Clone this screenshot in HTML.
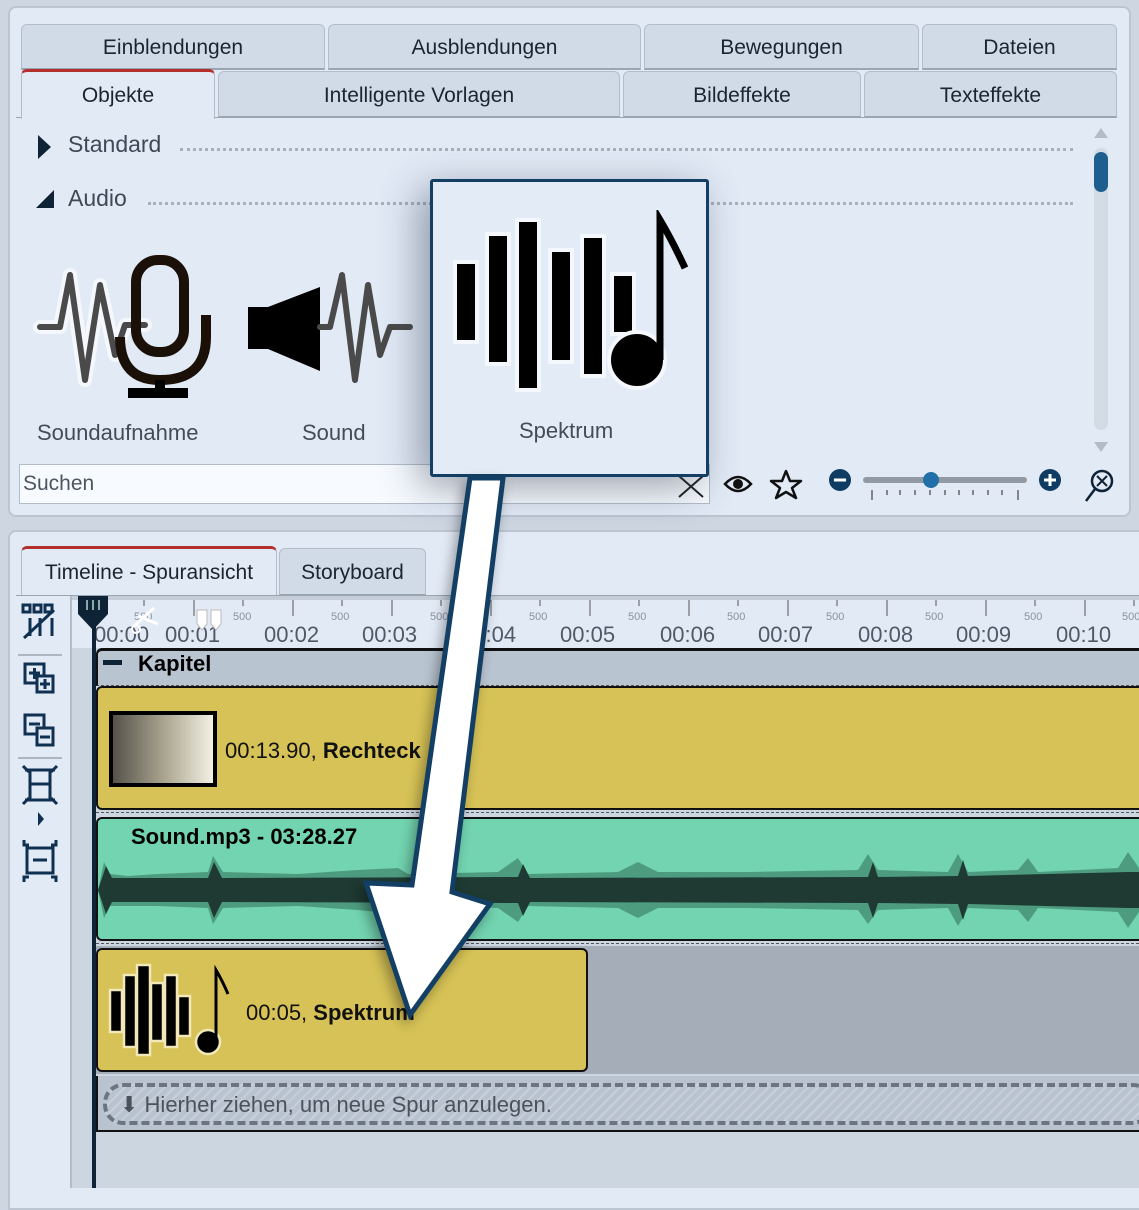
<!DOCTYPE html>
<html><head><meta charset="utf-8"><style>
*{box-sizing:border-box;margin:0;padding:0}
body{width:1139px;height:1188px;background:#cdd6e1;font-family:"Liberation Sans","DejaVu Sans",sans-serif;position:relative;overflow:hidden}
.abs{position:absolute}
.panel{position:absolute;background:#e2eaf6;border:2px solid #bcc6d2;border-radius:8px}
.tab{position:absolute;background:#d1dbe7;border:1px solid #b3bdc9;border-bottom:2px solid #9aa5b2;border-radius:6px 6px 0 0;font-size:21px;color:#1b2530;text-align:center}
.tab.act{background:#e2eaf6;border-top:3px solid #b3302e;border-bottom:none}
.lbl{position:absolute;font-size:22px;color:#444c56}
.time{position:absolute;font-size:22px;color:#505a66;top:622px}
.five{position:absolute;font-size:11px;color:#8a939e;top:611px}
</style></head><body>

<div class="panel" style="left:8px;top:6px;width:1123px;height:511px"></div>
<div class="tab" style="left:21px;top:24px;width:304px;height:46px;line-height:46px">Einblendungen</div>
<div class="tab" style="left:328px;top:24px;width:313px;height:46px;line-height:46px">Ausblendungen</div>
<div class="tab" style="left:644px;top:24px;width:275px;height:46px;line-height:46px">Bewegungen</div>
<div class="tab" style="left:922px;top:24px;width:195px;height:46px;line-height:46px">Dateien</div>
<div class="tab" style="left:218px;top:71px;width:402px;height:47px;line-height:47px">Intelligente Vorlagen</div>
<div class="tab" style="left:623px;top:71px;width:238px;height:47px;line-height:47px">Bildeffekte</div>
<div class="tab" style="left:864px;top:71px;width:253px;height:47px;line-height:47px">Texteffekte</div>
<div class="abs" style="left:16px;top:117px;width:1101px;height:1px;background:#9aa5b2"></div>
<div class="tab act" style="left:21px;top:69px;width:194px;height:50px;line-height:47px">Objekte</div>

<div class="abs" style="left:38px;top:135px;width:0;height:0;border-top:12px solid transparent;border-bottom:12px solid transparent;border-left:13px solid #0f2336"></div>
<div class="abs" style="left:68px;top:131px;font-size:23px;color:#3f4955">Standard</div>
<div class="abs" style="left:180px;top:148px;width:893px;border-top:3px dotted #a8b0ba"></div>
<div class="abs" style="left:36px;top:190px;width:0;height:0;border-left:18px solid transparent;border-bottom:18px solid #0f2336"></div>
<div class="abs" style="left:68px;top:185px;font-size:23px;color:#3f4955">Audio</div>
<div class="abs" style="left:148px;top:202px;width:925px;border-top:3px dotted #a8b0ba"></div>

<div class="abs" style="left:1094px;top:128px;width:0;height:0;border-left:7px solid transparent;border-right:7px solid transparent;border-bottom:10px solid #b4bcc6"></div>
<div class="abs" style="left:1094px;top:148px;width:14px;height:282px;background:#d3dbe5;border-radius:7px"></div>
<div class="abs" style="left:1094px;top:152px;width:14px;height:40px;background:#1f5f8f;border-radius:7px"></div>
<div class="abs" style="left:1094px;top:442px;width:0;height:0;border-left:7px solid transparent;border-right:7px solid transparent;border-top:10px solid #b4bcc6"></div>

<svg class="abs" style="left:30px;top:245px" width="400" height="165">
 <g fill="none" stroke="#f4f7fb" stroke-width="14" stroke-linejoin="round" stroke-linecap="round">
  <path d="M10 82 H30 L40 30 L55 135 L70 40 L85 110 L95 80 H115"/>
 </g>
 <g fill="none" stroke="#4a4a4a" stroke-width="6" stroke-linejoin="round" stroke-linecap="round">
  <path d="M10 82 H30 L40 30 L55 135 L70 40 L85 110 L95 80 H115"/>
 </g>
 <rect x="106" y="15" width="48" height="92" rx="22" fill="none" stroke="#1a1008" stroke-width="10"/>
 <path d="M90 92 Q90 135 130 135 Q176 135 176 92 V70" fill="none" stroke="#1a1008" stroke-width="10"/>
 <rect x="125" y="135" width="10" height="15" fill="#000"/>
 <rect x="98" y="143" width="60" height="10" fill="#000"/>
 <rect x="218" y="62" width="20" height="42" fill="#000"/>
 <path d="M238 62 L290 42 V126 L238 104Z" fill="#000"/>
 <path d="M290 82 H300 L312 30 L325 135 L338 40 L350 110 L360 82 H380" fill="none" stroke="#4a4a4a" stroke-width="6" stroke-linejoin="round" stroke-linecap="round"/>
</svg>
<div class="lbl" style="left:37px;top:420px">Soundaufnahme</div>
<div class="lbl" style="left:302px;top:420px">Sound</div>

<div class="abs" style="left:19px;top:464px;width:691px;height:40px;background:#f7fbff;border:1px solid #b3bdc9;font-size:21px;color:#4c5560;padding:7px 3px">Suchen</div>
<svg class="abs" style="left:676px;top:473px" width="30" height="26"><path d="M3 3 L27 24 M27 3 L3 24" stroke="#222" stroke-width="2"/></svg>

<svg class="abs" style="left:722px;top:466px" width="400" height="40">
 <path d="M3 18 Q16 4 29 18 Q16 32 3 18Z" fill="none" stroke="#111" stroke-width="2.5"/><circle cx="16" cy="18" r="5" fill="#111"/>
 <path d="M64 5 L68 15 L79 15 L70 22 L74 32 L64 26 L54 32 L58 22 L49 15 L60 15Z" fill="none" stroke="#111" stroke-width="2.5" stroke-linejoin="round"/>
 <circle cx="118" cy="14" r="11" fill="#0f3c63"/><rect x="112" y="12.5" width="12" height="3" fill="#fff"/>
 <rect x="141" y="11" width="164" height="6" rx="3" fill="#9199a4"/>
 <circle cx="209" cy="14" r="8" fill="#2370a8"/>
 <g stroke="#222" stroke-width="1"><path d="M150 24v10M165 24v5M178 24v5M193 24v5M208 24v5M223 24v5M237 24v5M251 24v5M266 24v5M280 24v5M296 24v10"/></g>
 <circle cx="328" cy="14" r="11" fill="#0f3c63"/><rect x="322" y="12.5" width="12" height="3" fill="#fff"/><rect x="326.5" y="8" width="3" height="12" fill="#fff"/>
 <circle cx="380" cy="15" r="10" fill="none" stroke="#0f2336" stroke-width="2.5"/><path d="M373 23 L364 35" stroke="#0f2336" stroke-width="2.5"/><path d="M375 10 L385 20 M385 10 L375 20" stroke="#0f2336" stroke-width="2"/>
</svg>

<div class="panel" style="left:8px;top:530px;width:1140px;height:680px;border-radius:8px 0 0 0"></div>
<div class="tab" style="left:279px;top:548px;width:147px;height:48px;line-height:48px">Storyboard</div>
<div class="tab act" style="left:21px;top:546px;width:256px;height:50px;line-height:47px">Timeline - Spuransicht</div>
<div class="abs" style="left:16px;top:595px;width:1123px;height:1px;background:#9aa5b2"></div>
<div class="abs" style="left:70px;top:596px;width:2px;height:592px;background:#b3bdc9"></div>
<svg class="abs" style="left:18px;top:598px" width="52" height="290" fill="none" stroke="#0f3050" stroke-width="3">
 <rect x="5" y="7" width="7" height="7"/><rect x="16" y="7" width="7" height="7"/><rect x="27" y="7" width="7" height="7"/>
 <path d="M12 20v18M22 20v18M34 20v18M6 40 L36 12"/>
 <path d="M0 57h44" stroke="#9aa5b2" stroke-width="1.5"/>
 <rect x="7" y="66" width="19" height="19"/><rect x="19" y="78" width="16" height="16" fill="#e2eaf6"/>
 <path d="M11 75h11M16.5 70v11M22 86h10M27 81v10"/>
 <rect x="7" y="117" width="19" height="19"/><rect x="19" y="130" width="16" height="17" fill="#e2eaf6"/>
 <path d="M11 126h11M22 139h10"/>
 <path d="M0 160h44" stroke="#9aa5b2" stroke-width="1.5"/>
 <path d="M7 172h30M7 202h30M12 172v30M32 172v30M12 186h20M5 168l6 6M39 168l-6 6M5 206l6-6M39 206l-6-6"/>
 <path d="M20 214v14l6-7z" fill="#0f3050" stroke="none"/>
 <path d="M9 250h26v25H9z M15 262h14 M6 242v5h5M38 242v5h-5M6 284v-5h5M38 284v-5h-5"/>
</svg>

<div class="abs" style="left:72px;top:596px;width:1067px;height:592px;background:#ccd6e1"></div>
<div class="abs" style="left:72px;top:596px;width:1067px;height:52px;background:#e2eaf6;border-top:4px solid #c4cdd8"></div>
<svg class="abs" style="left:72px;top:600px" width="1067" height="20" stroke="#555" stroke-width="1">
 <path d="M122 0v16M221 0v16M320 0v16M419 0v16M518 0v16M617 0v16M716 0v16M815 0v16M914 0v16M1013 0v16 M72 0v6M171 0v6M270 0v6M369 0v6M468 0v6M567 0v6M666 0v6M765 0v6M864 0v6M963 0v6M1062 0v6"/>
</svg>
<div class="five" style="left:134px">500</div><div class="five" style="left:233px">500</div><div class="five" style="left:331px">500</div><div class="five" style="left:430px">500</div><div class="five" style="left:529px">500</div><div class="five" style="left:628px">500</div><div class="five" style="left:727px">500</div><div class="five" style="left:826px">500</div><div class="five" style="left:925px">500</div><div class="five" style="left:1024px">500</div><div class="five" style="left:1122px">500</div>
<div class="time" style="left:94px">00:00</div><div class="time" style="left:165px">00:01</div><div class="time" style="left:264px">00:02</div><div class="time" style="left:362px">00:03</div><div class="time" style="left:461px">00:04</div><div class="time" style="left:560px">00:05</div><div class="time" style="left:660px">00:06</div><div class="time" style="left:758px">00:07</div><div class="time" style="left:858px">00:08</div><div class="time" style="left:956px">00:09</div><div class="time" style="left:1056px">00:10</div>
<svg class="abs" style="left:76px;top:596px" width="160" height="50">
 <path d="M2 0h30v18l-15 16l-15-16z" fill="#0f2336"/>
 <path d="M11 4v10M17 4v10M23 4v10" stroke="#8aa" stroke-width="2"/>
 <path d="M58 30l20-18M62 20l20 8" stroke="#fff" stroke-width="3"/><circle cx="60" cy="33" r="4" fill="none" stroke="#fff" stroke-width="2"/>
 <path d="M121 14h10v14l-5 6l-5-6z M135 14h10v14l-5 6l-5-6z" fill="#fff" stroke="#bbb"/>
</svg>
<div class="abs" style="left:92px;top:625px;width:4px;height:563px;background:#0f2336"></div>

<div class="abs" style="left:96px;top:648px;width:1043px;height:38px;background:#b9c4d1;border-top:3px solid #111;border-left:2px solid #111;border-radius:6px 0 0 0;border-bottom:1px dashed #555"></div>
<div class="abs" style="left:103px;top:660px;width:19px;height:5px;background:#0f2336"></div>
<div class="abs" style="left:138px;top:651px;font-size:22px;font-weight:bold;color:#000">Kapitel</div>
<div class="abs" style="left:96px;top:686px;width:1050px;height:124px;background:#d6c256;border:2px solid #111;border-radius:6px"></div>
<div class="abs" style="left:109px;top:711px;width:108px;height:76px;border:4px solid #000;background:linear-gradient(90deg,#55524a,#a8a38e 50%,#f3f1e4)"></div>
<div class="abs" style="left:225px;top:738px;font-size:22px;color:#111">00:13.90, <b>Rechteck</b></div>
<div class="abs" style="left:96px;top:812px;width:1043px;border-top:1px dashed #555"></div>
<div class="abs" style="left:96px;top:817px;width:1050px;height:124px;background:#72d4b0;border:2px solid #111;border-radius:6px"></div>
<div class="abs" style="left:131px;top:824px;font-size:22px;font-weight:bold;color:#000">Sound.mp3 - 03:28.27</div>
<svg class="abs" style="left:98px;top:850px" width="1041" height="80">
 <path d="M0 40 L6 12 L12 24 L30 26 L60 24 L110 22 L115 6 L125 22 L200 24 L260 20 L300 18 L310 24 L400 22 L420 8 L430 24 L520 22 L540 12 L560 22 L650 22 L760 20 L770 4 L780 20 L850 22 L860 4 L870 22 L920 20 L930 8 L940 22 L1020 18 L1030 2 L1041 18 L1041 62 L1030 78 L1020 62 L940 58 L930 72 L920 60 L870 58 L860 76 L850 58 L780 60 L770 74 L760 60 L650 58 L560 58 L540 68 L520 58 L430 56 L420 72 L400 58 L310 56 L300 64 L260 60 L200 56 L125 58 L115 74 L110 58 L60 56 L12 56 L6 68Z" fill="#4e9c80"/>
 <path d="M0 40 L8 16 L14 28 L110 28 L116 12 L124 28 L420 27 L425 14 L432 28 L770 27 L775 12 L780 27 L860 26 L865 10 L870 26 L1030 22 L1041 22 L1041 58 L1030 58 L870 54 L865 70 L860 54 L780 53 L775 68 L770 53 L432 52 L425 66 L420 53 L124 52 L116 68 L110 52 L14 52 L8 64Z" fill="#1e3a32"/>
</svg>
<div class="abs" style="left:96px;top:943px;width:1043px;border-top:1px dashed #555"></div>
<div class="abs" style="left:96px;top:946px;width:1043px;height:128px;background:#a5adb8"></div>
<div class="abs" style="left:96px;top:948px;width:492px;height:124px;background:#d6c256;border:2px solid #111;border-radius:6px"></div>
<svg class="abs" style="left:104px;top:960px" width="135" height="100">
 <g fill="#000" stroke="#f1e7b8" stroke-width="2.5">
  <rect x="6" y="30" width="12" height="42"/><rect x="20" y="15" width="12" height="72"/><rect x="33" y="5" width="13" height="90"/><rect x="47" y="23" width="12" height="58"/><rect x="61" y="15" width="12" height="72"/><rect x="74" y="36" width="12" height="40"/>
  <circle cx="104" cy="82" r="12"/>
 </g>
 <path d="M112 82 V10 Q118 20 124 34" fill="none" stroke="#000" stroke-width="3"/>
</svg>
<div class="abs" style="left:246px;top:1000px;font-size:22px;color:#111">00:05, <b>Spektrum</b></div>
<div class="abs" style="left:96px;top:1076px;width:1043px;height:56px;background:#b9c3cf;border-bottom:2px solid #111;border-left:2px solid #111"></div>
<div class="abs" style="left:103px;top:1083px;width:1050px;height:42px;border:4px dashed #6b7480;border-radius:20px;background:repeating-linear-gradient(135deg,#b9c3cf 0 5px,#c7d0da 5px 7px)"></div>
<div class="abs" style="left:120px;top:1092px;font-size:22px;color:#4a525c">⬇ Hierher ziehen, um neue Spur anzulegen.</div>

<div class="abs" style="left:430px;top:179px;width:279px;height:298px;background:#e3ebf6;border:3px solid #123f63;border-radius:3px;box-shadow:-10px 10px 40px rgba(40,50,70,.45)"></div>
<svg class="abs" style="left:440px;top:210px" width="260" height="190">
 <g fill="#000" stroke="#f4f7fb" stroke-width="4">
  <rect x="15" y="52" width="22" height="80"/><rect x="47" y="24" width="22" height="130"/><rect x="77" y="10" width="22" height="170"/><rect x="110" y="40" width="22" height="112"/><rect x="142" y="26" width="22" height="140"/><rect x="172" y="64" width="22" height="60"/>
  <circle cx="197" cy="150" r="28"/>
 </g>
 <path d="M220 150 V10 Q232 30 245 58" fill="none" stroke="#000" stroke-width="7"/>
</svg>
<div class="abs" style="left:519px;top:418px;font-size:22px;color:#444c56">Spektrum</div>

<svg class="abs" style="left:0;top:0;pointer-events:none" width="1139" height="1188">
 <path d="M470 478 L503 478 L452 892 L490 904 L410 1015 L366 883 L412 885 Z" fill="#fff" stroke="#123f63" stroke-width="5" stroke-linejoin="miter" style="filter:drop-shadow(-4px 6px 6px rgba(0,0,0,.35))"/>
</svg>
</body></html>
